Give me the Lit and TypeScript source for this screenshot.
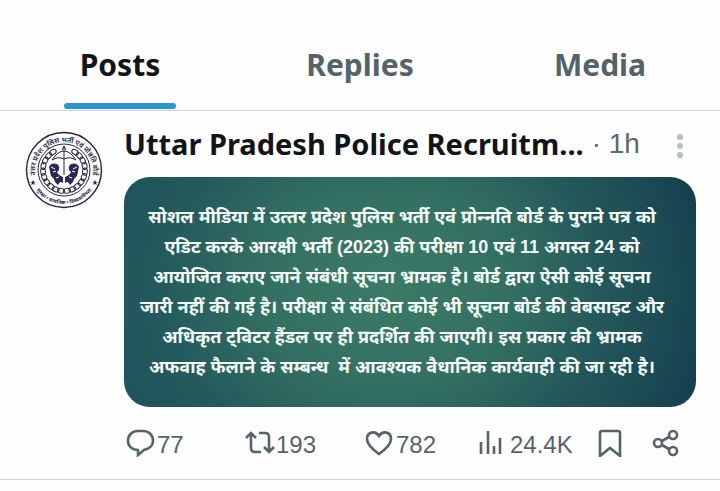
import { LitElement, html, svg, css } from "lit";
import { customElement } from "lit/decorators.js";

@customElement("board-seal")
class BoardSeal extends LitElement {
  static styles = css`
    :host { display: block; }
    svg { display: block; width: 100%; height: auto; }
    .ring { font: 600 7px "Noto Sans", "Noto Sans Devanagari", sans-serif; fill: #26243f; }
    .motto { font: 700 5px "Noto Sans", "Noto Sans Devanagari", sans-serif; fill: #26243f; }
  `;

  private wreath() {
    const links = [];
    for (let i = 0; i < 20; i++) {
      const a = 32 + (i * 296) / 19;
      links.push(svg`<ellipse cx="0" cy="-21" rx="3.6" ry="2.4" transform=${`rotate(${a})`} />`);
    }
    return links;
  }

  render() {
    return html`<svg viewBox="-39 -39 78 78" role="img" aria-label="Board seal">
      <defs>
        <path id="top" d="M-25.500 15A29 29 0 1 1 25.500 15" />
        <path id="bottom" d="M-29.500 17A34 34 0 0 0 29.500 17" />
      </defs>
      <g fill="none" stroke="#26243f">
        <circle r="37.500" stroke-width="1.400" />
        <circle r="26" stroke-width="1" />
        <g stroke-width="1">${this.wreath()}</g>
        <path d="M-12-10Q0-28 12-10Q6-14 0-11Q-6-14-12-10M0-24V5M-2-20L0-24L2-20" stroke-width="1" />
      </g>
      <g fill="#29265c">
        <path d="M-15-3Q-13-8-7-6Q-4-4-5 0L-7 2Q-6 5-1 7L-1 13Q-4 10-6 15L-9 12Q-10 8-13 6Z" />
        <path d="M15-3Q13-8 7-6Q4-4 5 0L7 2Q6 5 1 7L1 13Q4 10 6 15L9 12Q10 8 13 6Z" />
        <path d="M-31 10l1 2 2 0-2 1 1 2-2-1-2 1 1-2-2-1 2 0zM31 10l1 2 2 0-2 1 1 2-2-1-2 1 1-2-2-1 2 0z" />
      </g>
      <path d="M-13-3l4 2M-11 2l3-1M13-3l-4 2M11 2l-3-1M-8 8l3-1M8 8l-3-1" stroke="#fff" stroke-width="1" />
      <text class="ring" text-anchor="middle"><textPath href="#top" startOffset="50%">उत्तर प्रदेश पुलिस भर्ती एवं प्रोन्नति बोर्ड</textPath></text>
      <text class="motto" text-anchor="middle"><textPath href="#bottom" startOffset="50%">सुरक्षा • सत्यनिष्ठा • विश्वसनीयता</textPath></text>
    </svg>`;
  }
}

const notice = [
  "सोशल मीडिया में उत्\u200Dतर प्रदेश पुलिस भर्ती एवं प्रोन्\u200Dनति बोर्ड के पुराने पत्र को",
  "एडिट करके आरक्षी भर्ती (2023) की परीक्षा 10 एवं 11 अगस्त 24 को",
  "आयोजित कराए जाने संबंधी सूचना भ्रामक है। बोर्ड द्वारा ऐसी कोई सूचना",
  "जारी नहीं की गई है। परीक्षा से संबंधित कोई भी सूचना बोर्ड की वेबसाइट और",
  "अधिकृत ट्विटर हैंडल पर ही प्रदर्शित की जाएगी। इस प्रकार की भ्रामक",
  "अफवाह फैलाने के सम्बन्ध  में आवश्यक वैधानिक कार्यवाही की जा रही है।",
];

const icons = {
  reply: svg`<path d="M12 2H17C23 2 27 6 27 12C27 17 22 20 18 21L12 26V21C6 21 2 17 2 12C2 6 6 2 12 2Z" />`,
  repost: svg`<path d="M1 9L6 4L11 9M6 5V19Q6 23 10 23H16M14 4H20Q24 4 24 8V22M19 18L24 23L29 18" />`,
  like: svg`<path d="M14 25C7 20 2 15 2 10C2 3 10 1 14 7C18 1 26 3 26 10C26 15 21 20 14 25Z" />`,
  views: svg`<path d="M2 25V13M9 25V2M15 25V17M21 25V9" />`,
  bookmark: svg`<path d="M2 27V4Q2 2 4 2H20Q22 2 22 4V27L12 19Z" />`,
  share: svg`<circle cx="6" cy="14" r="4" /><circle cx="21" cy="6" r="4" /><circle cx="21" cy="22" r="4" /><path d="M10 12L17 8M10 16L17 20" />`,
};

const actions = [
  { label: "Reply", icon: icons.reply, count: "77" },
  { label: "Repost", icon: icons.repost, count: "193" },
  { label: "Like", icon: icons.like, count: "782" },
  { label: "Views", icon: icons.views, count: "24.4K" },
  { label: "Bookmark", icon: icons.bookmark, count: "" },
  { label: "Share", icon: icons.share, count: "" },
];

@customElement("app-root")
class AppRoot extends LitElement {
  static styles = css`
    :host {
      display: block;
      min-height: 100vh;
      background: #fefefe;
      color: #11151a;
      font-family: "Noto Sans", "Noto Sans Devanagari", sans-serif;
    }
    * { box-sizing: border-box; }
    button { border: 0; padding: 0; background: none; color: inherit; font: inherit; cursor: pointer; }
    .tabs {
      display: grid;
      grid-template-columns: repeat(3, 1fr);
      height: 111px;
      padding-top: 20px;
      border-bottom: 1px solid #cbd7dc;
    }
    .tab {
      display: flex;
      flex-direction: column;
      align-items: center;
      justify-content: space-between;
      padding: 24px 0 1px;
      color: #536369;
      font-size: 30px;
      line-height: 42px;
      font-weight: 700;
    }
    .tab.active { color: #11151a; }
    .bar { width: 112px; height: 6px; border-radius: 3px; }
    .active .bar { background: #2d94d8; }
    .post {
      display: grid;
      grid-template-columns: 78px minmax(0, 1fr);
      column-gap: 21px;
      padding: 13px 24px 16px 25px;
      border-bottom: 1px solid #cfd3d5;
    }
    .avatar { padding-top: 7px; }
    .head { display: flex; align-items: center; height: 40px; font-size: 29px; line-height: 40px; white-space: nowrap; }
    .name { margin: 0; font-size: 29px; font-weight: 700; }
    .time { margin-left: 8px; color: #5b686f; font-family: "Liberation Sans", Arial, sans-serif; font-size: 28px; }
    .more { display: flex; margin-left: auto; padding: 4px 12px 0 0; color: #b5bfc6; }
    .more svg, .action svg { display: block; flex: none; }
    .card {
      display: flex;
      flex-direction: column;
      align-items: center;
      margin: 13px 0 0;
      padding: 25px 16px 25px 0;
      border-radius: 26px;
      background:
        radial-gradient(ellipse 60% 120% at 46% 48%, #3b7a67 0%, #347062 35%, rgba(40, 96, 94, 0.7) 65%, rgba(29, 76, 88, 0) 100%),
        linear-gradient(90deg, #1b4f5c, #153d4e);
      color: #f3fbf8;
      font-family: "Liberation Sans", "Noto Sans Devanagari", sans-serif;
      font-size: 18px;
      line-height: 30px;
      font-weight: 700;
      white-space: pre;
    }
    .actions {
      display: grid;
      grid-template-columns: 119fr 120fr 114fr 119fr 54fr 44fr;
      margin-top: 16px;
      padding-left: 2px;
    }
    .action {
      display: flex;
      align-items: center;
      gap: 1px;
      height: 40px;
      color: #53646b;
      font-family: "Liberation Sans", Arial, sans-serif;
      font-size: 24px;
    }
    .count { padding-top: 3px; }
    .action svg { fill: none; stroke: currentColor; stroke-width: 2.6; }
  `;

  render() {
    return html`
      <nav class="tabs" role="tablist">
        ${["Posts", "Replies", "Media"].map(
          (t, i) => html`<button class="tab ${i ? "" : "active"}" role="tab" aria-selected=${i ? "false" : "true"}>
            <span>${t}</span><span class="bar"></span>
          </button>`
        )}
      </nav>
      <article class="post">
        <board-seal class="avatar"></board-seal>
        <div>
          <header class="head">
            <h1 class="name">Uttar Pradesh Police Recruitm...</h1>
            <span class="time">· 1h</span>
            <button class="more" aria-label="More">
              <svg width="8" height="26" viewBox="0 0 8 26" fill="currentColor">
                <circle cx="4" cy="4" r="3" /><circle cx="4" cy="13" r="3" /><circle cx="4" cy="22" r="3" />
              </svg>
            </button>
          </header>
          <div class="card" lang="hi">${notice.map((line) => html`<span>${line}</span>`)}</div>
          <div class="actions">
            ${actions.map(
              (a) => html`<button class="action" aria-label=${a.label}>
                <svg width="30" height="28" viewBox="0 0 30 28">${a.icon}</svg>
                ${a.count ? html`<span class="count">${a.count}</span>` : ""}
              </button>`
            )}
          </div>
        </div>
      </article>
    `;
  }
}
